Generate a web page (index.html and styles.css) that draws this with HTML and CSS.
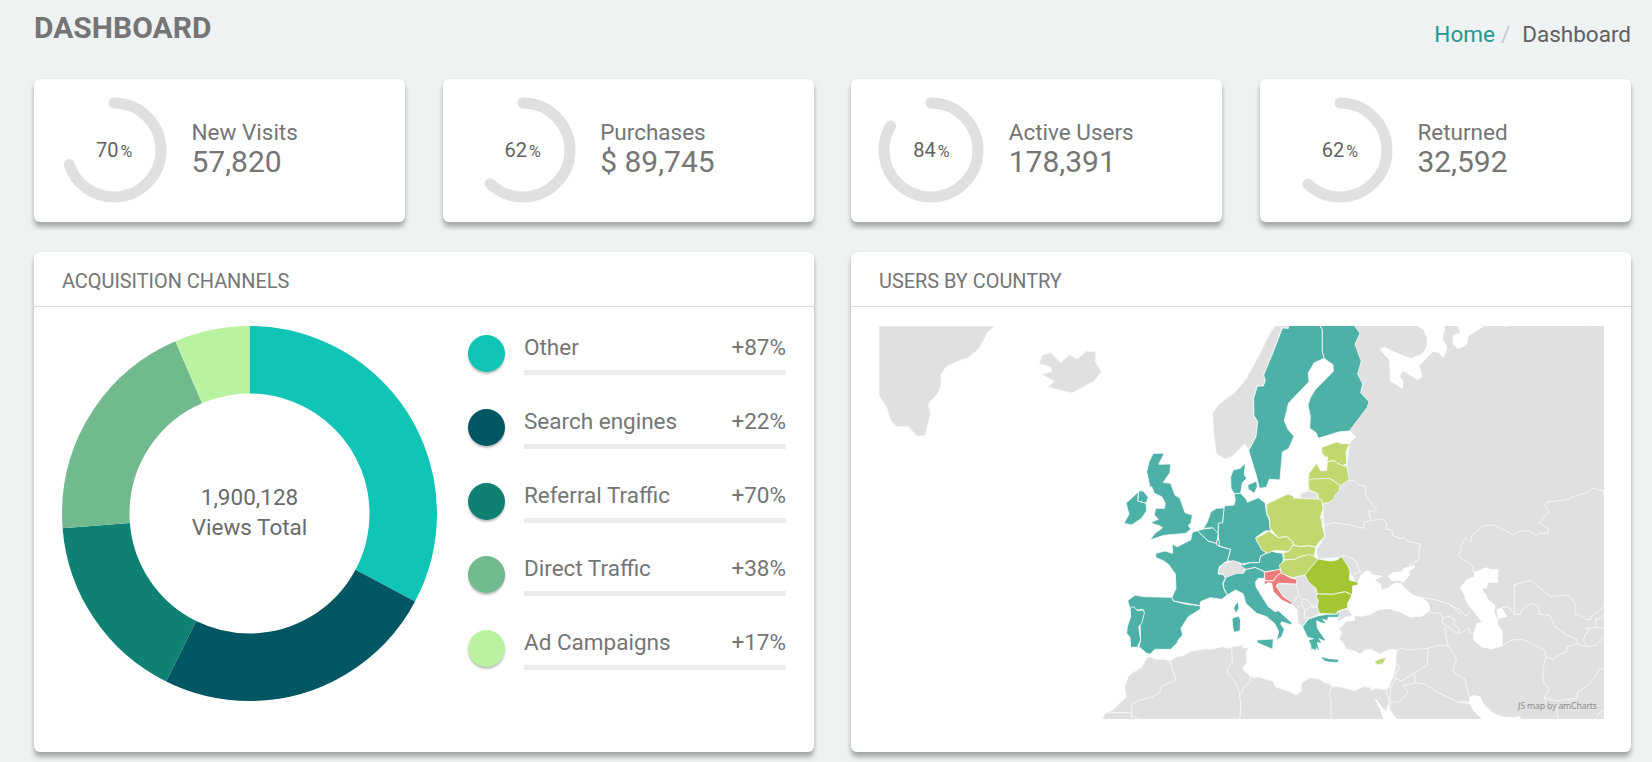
FILE: index.html
```
<!DOCTYPE html>
<html lang="en">
<head>
<meta charset="utf-8">
<title>Dashboard</title>
<link rel="stylesheet" href="styles.css">
</head>
<body>
<header class="page-head">
  <h1>DASHBOARD</h1>
  <nav class="crumbs"><a href="#">Home</a><span class="sep">/</span><span>Dashboard</span></nav>
</header>

<main>
  <section class="stats">
    <article class="card stat">
      <div class="ring"><svg viewBox="0 0 106 106"><circle cx="53" cy="53" r="47" pathLength="100" stroke-dasharray="70 100"/></svg><span class="pct">70<small>%</small></span></div>
      <div class="info"><span class="label">New Visits</span><span class="value">57,820</span></div>
    </article>
    <article class="card stat">
      <div class="ring"><svg viewBox="0 0 106 106"><circle cx="53" cy="53" r="47" pathLength="100" stroke-dasharray="62.3 100"/></svg><span class="pct">62<small>%</small></span></div>
      <div class="info"><span class="label">Purchases</span><span class="value">$ 89,745</span></div>
    </article>
    <article class="card stat">
      <div class="ring"><svg viewBox="0 0 106 106"><circle cx="53" cy="53" r="47" pathLength="100" stroke-dasharray="83.5 100"/></svg><span class="pct">84<small>%</small></span></div>
      <div class="info"><span class="label">Active Users</span><span class="value">178,391</span></div>
    </article>
    <article class="card stat">
      <div class="ring"><svg viewBox="0 0 106 106"><circle cx="53" cy="53" r="47" pathLength="100" stroke-dasharray="62 100"/></svg><span class="pct">62<small>%</small></span></div>
      <div class="info"><span class="label">Returned</span><span class="value">32,592</span></div>
    </article>
  </section>

  <section class="panels">
    <article class="card panel">
      <h2>ACQUISITION CHANNELS</h2>
      <div class="panel-body">
        <div class="donut">
          <svg viewBox="0 0 375 375">
            <g fill="none" stroke-width="67.5" transform="rotate(-90 187.5 187.5)">
              <circle class="s1" cx="187.5" cy="187.5" r="153.75" pathLength="360" stroke-dasharray="118 360"/>
              <circle class="s2" cx="187.5" cy="187.5" r="153.75" pathLength="360" stroke-dasharray="88.4 360" stroke-dashoffset="-118"/>
              <circle class="s3" cx="187.5" cy="187.5" r="153.75" pathLength="360" stroke-dasharray="59.1 360" stroke-dashoffset="-206.4"/>
              <circle class="s4" cx="187.5" cy="187.5" r="153.75" pathLength="360" stroke-dasharray="71.2 360" stroke-dashoffset="-265.5"/>
              <circle class="s5" cx="187.5" cy="187.5" r="153.75" pathLength="360" stroke-dasharray="23.3 360" stroke-dashoffset="-336.7"/>
            </g>
          </svg>
          <p class="total">1,900,128<br>Views Total</p>
        </div>
        <ul class="legend">
          <li><i class="dot d1"></i><div class="row"><span>Other</span><span>+87%</span></div></li>
          <li><i class="dot d2"></i><div class="row"><span>Search engines</span><span>+22%</span></div></li>
          <li><i class="dot d3"></i><div class="row"><span>Referral Traffic</span><span>+70%</span></div></li>
          <li><i class="dot d4"></i><div class="row"><span>Direct Traffic</span><span>+38%</span></div></li>
          <li><i class="dot d5"></i><div class="row"><span>Ad Campaigns</span><span>+17%</span></div></li>
        </ul>
      </div>
    </article>

    <article class="card panel">
      <h2>USERS BY COUNTRY</h2>
      <div class="panel-body">
        <svg class="map" viewBox="879 326 725 393">
          <!-- Greenland, Iceland -->
          <g class="land" transform="translate(860 310) scale(.33333)">
            <path d="M57 48H405L384 66 358 115 322 145 308 148 259 169 243 193V225L234 250 205 282 211 313 195 377 170 378 145 350 108 349 92 331 80 292 57 256Z"/>
            <path d="M537 162 547 135 573 128 602 158 628 134 652 147 680 123 708 126 705 154 724 184 703 213 636 249 565 231 582 213 544 193 574 185 573 171Z"/>
          </g>
          <!-- Russia, Ukraine, Turkey, Middle East, Central Asia -->
          <g class="land" transform="translate(1340 540) scale(.33333)">
            <path d="M40 -645H800V540H148L137 515 137 449 145 445 163 400 168 372 168 345 172 330 150 328 130 337 118 341 95 328 75 330 60 342 45 333 20 328 10 310-2 296 6 278-4 265 10 248 25 240 43 225 15 232-5 248-8 222 5 205 28 208 45 125 5 52-66 57-72 30-45-10-53-110-20-160 25-180 20-225 28-289 47-310 28-328Z"/>
          </g>
          <!-- North Africa -->
          <g class="land" transform="translate(1080 580) scale(.33333)">
            <path d="M65 418 78 398 98 390 138 352 134 320 145 290 155 280 185 262 203 231 215 232 225 238 255 238 270 243 290 231 310 227 335 213 380 207 400 207 425 200 445 205 460 200 490 195 488 203 505 204 498 218 500 250 488 262 490 270 510 288 522 293 535 291 578 304 587 321 630 335 648 345 662 335 665 308 690 293 718 297 728 305 752 313 755 320 778 320 823 332 850 320 870 322 878 332 882 325 917 329 930 365 930 418Z"/>
            <path d="M645-12 675-15 708 25 712 42 708 50 715 62 718 100 712 105 680 120 668 140 655 130 652 90 637 72 592 30 590 12 650 12Z"/>
          </g>
          <!-- Scandinavia -->
          <g transform="translate(1190 320) scale(.33333)">
            <path class="land" d="M258 15 240 40 210 100 168 178 132 220 85 254 68 279 72 350 79 400 103 417 128 409 164 371 176 390 198 350 203 304 192 290 191 235 202 198 220 198 226 182 221 165 250 95 275 24 295 25V15Z"/>
            <path class="eu" d="M296 15H388L397 28V95L403 115 373 128 355 158 357 185 296 249 283 302 294 328 312 349 296 386 277 396 270 480 238 478 229 502 208 505 200 470 176 392 198 350 203 304 192 288 191 235 202 198 220 198 226 182 221 165 250 95 277 24 295 25Z"/>
            <path class="eu" d="M388 15H492L510 40 495 73 514 124 503 162 518 192 512 218 537 245 532 262 478 333 446 336 385 355 378 338 359 324 361 290 354 254 361 234 375 210 430 154 429 134 403 116 397 95V28Z"/>
          </g>
          <!-- Western Europe -->
          <g class="eu" transform="translate(1100 440) scale(.33333)">
            <path d="M160 40H193L176 73 212 72 210 98 190 127 212 130 225 165 240 175 255 218 277 225 273 250 265 255 272 268 258 280 235 282 200 285 185 288 165 295 150 300 165 280 188 263 180 258 155 250 157 245 175 238 163 225 167 205 193 205 196 190 185 170 163 160 155 140 150 142 140 95 147 65Z"/>
            <path d="M117 152 130 153 145 172 138 190 113 183Z"/>
            <path d="M115 155 113 183 138 190 140 212 125 235 95 255 72 250 87 222 78 190Z"/>
            <path d="M167 340 195 333 218 340 216 312 232 320 272 300 277 277 293 272 305 285 325 303 350 310 355 318 392 328 383 362 358 380 355 402 370 403 376 415 368 430 373 450 382 465 365 478 330 473 302 485 300 497 260 490 220 483 216 472 228 445 226 402 207 375 192 363 168 353Z"/>
            <path d="M293 272 310 267 340 263 355 280 350 310 325 303 305 285Z"/>
            <path d="M310 265 320 250 333 215 350 205 373 203 368 248 355 255V280L338 263Z"/>
            <path d="M373 198 402 195 406 180 402 160 423 160 440 180 442 187 475 173 495 188 500 222 508 240 512 272 495 273 467 293 473 308 500 340 482 348 478 368 450 368 425 372 383 362 392 328 357 318 355 300 355 250 368 248Z"/>
            <path d="M350 302 357 298 358 318 350 315Z"/>
            <path d="M392 110 400 90 420 85 436 70 433 105 440 115 427 128 422 160 402 160 393 145Z"/>
            <path d="M443 135 470 123 472 140 463 160 445 148Z"/>
            <path class="land" d="M355 390 372 368 400 362 420 368 438 385 430 398 410 402 395 407 378 414 370 403 355 402Z"/>
            <path d="M370 430 378 412 410 400 430 400 438 388 465 382 493 395V415L475 415 467 425 468 440 483 465 505 500 525 515 535 512 575 548V555L545 545 542 552 553 568 545 590 530 600 536 575 525 552 500 530 470 520 437 490 430 462 407 450 382 465 372 445Z"/>
            <path d="M420 370 430 375 450 368 478 368 482 348 500 340 512 332 523 336 548 340 550 360 540 385 540 390 495 395 465 382 438 388 425 380Z"/>
            <path d="M470 600 520 597 518 628 472 608ZM396 535 415 528 422 540 420 573 402 577 398 560ZM405 495 415 485 417 505 408 520 401 505Z"/>
            <path d="M83 482 105 465 130 470 215 472 220 483 260 493 300 497 302 507 265 530 243 565 248 585 235 600 232 608 212 628 165 628 150 643 140 640 117 620 122 600 120 550 133 515 128 508 112 510 90 505Z"/>
            <path d="M90 505 102 500 112 512 130 510 133 520 125 550 116 560 122 600 112 622 92 622 90 592 80 580 82 560 92 530Z"/>
            <path class="red" d="M493 397 538 388 545 398 530 408 520 423 495 422Z"/>
            <path class="red" d="M545 398 570 413 590 418 590 432 535 430 528 438 550 470 575 487 577 495 545 480 520 455 515 430 503 428 495 435 492 422 520 423 530 408Z"/>
          </g>
          <!-- Baltic states and Central Europe -->
          <g class="lime" transform="translate(1240 430) scale(.33333)">
            <path class="land" d="M181 203 180 192 205 182 232 190V208H185Z"/>
            <path d="M245 52 290 36 305 41 328 41 318 65 320 100 308 107 290 98 283 92 262 95V80L256 82 246 70Z"/>
            <path d="M262 95 283 92 290 98 308 107 320 108 328 150 300 167 285 155 268 145 204 152 207 130 230 100 242 122 260 122Z"/>
            <path d="M204 152 215 147 268 145 285 155 300 167 298 182 285 195 282 208 265 218 248 220 235 208 233 190 207 180Z"/>
            <path d="M80 222 143 192 160 198 160 204 245 208 250 235 242 262 248 265 246 285 255 320 235 340 230 352 205 347 180 350 160 345 158 335 140 320 115 323 90 295 88 265 80 250Z"/>
            <path d="M47 325 88 303 115 323 140 320 158 335 160 345 145 365 123 362 100 362 82 370 65 360Z"/>
            <path d="M160 345 180 350 205 347 228 352 223 380 190 377 165 388 132 390 130 368 145 365Z"/>
            <path d="M132 390 165 388 190 377 210 373 223 380 234 388 210 425 195 435 157 443 125 430 118 405 130 395Z"/>
            <path class="green" d="M195 435 234 387 270 393 290 390 305 380 325 410 330 425 328 450 353 458 350 465 338 468 337 495 315 485 280 493 232 492 228 475 205 455Z"/>
            <path class="green" d="M232 492 280 493 315 485 337 495 323 522 323 535 295 543 288 553 238 550 232 532 235 512 228 500Z"/>
          </g>
          <!-- Greece, Crete -->
          <g class="eu" transform="translate(1080 580) scale(.33333)">
            <path d="M668 140 685 118 712 108 740 103 768 103 772 96 780 97 775 112 745 112 742 122 728 118 740 132 722 128 710 122 712 145 735 178 733 184 718 176 725 190 712 188 718 213 708 203 710 213 698 207 694 213 692 195 685 180 700 176 682 172Z"/>
            <path class="island" d="M727 233 745 238 775 241 770 246 735 242Z"/>
          </g>
          <path class="lime" transform="translate(1340 540) scale(.33333)" d="M103 365 120 357 140 352 128 372 112 375Z"/>
          <!-- Seas -->
          <g class="sea" transform="translate(1360 310) scale(.33333)">
            <path d="M172 40V48L190 60 200 80V110L185 132 152 145 110 128 73 111 58 118 88 150 90 213 128 237 130 215 120 198 130 183 172 210 188 200 178 168 218 126 235 128 251 143 262 112 247 85 255 60 252 40Z"/>
            <path d="M290 40 300 68 278 75V103L294 117 320 106 326 77 375 48V40ZM425 46 443 51 445 46ZM683 46 689 51 690 46Z"/>
          </g>
          <g class="sea" transform="translate(1340 540) scale(.33333)">
            <path d="M103 474 110 480 137 515 148 484V508L173 540H130L120 507Z"/>
            <path d="M388 470 403 465 422 470 430 490 460 520 490 530 520 532 538 528 545 540H428L400 512 388 490Z"/>
            <path d="M402 97 440 82 450 88 475 88 474 128 443 128 441 145 425 147 440 165 443 178 466 195 463 215 472 238 475 255 488 275V318L455 328 425 322 400 300V280L410 250 425 246 378 185 372 165 360 143 380 118 402 110ZM470 208 485 203 502 230 474 237Z"/>
            <path d="M53 125 62 105 78 92 90 93 95 103 130 108 105 120 122 133 125 147 140 145 165 128 182 128 195 145 220 165 245 172 263 185 270 200V213L245 230 210 232 180 217 150 207 115 210 90 225 60 230 35 225 22 205V190L38 160 40 140Z"/>
            <path d="M143 108 160 96 185 95 190 85 222 75 225 82 207 95 210 105 190 128 180 122 155 122Z"/>
            <path d="M-8 245 15 232 45 228 44 243 22 244-2 266Z"/>
          </g>
          <!-- Danube delta -->
          <path class="delta" transform="translate(1340 540) scale(.33333)" d="M28 124 45 125 54 129 50 135 38 136 28 134Z"/>
          <!-- Borders -->
          <g class="line" transform="translate(1360 310) scale(.33333)">
            <path d="M732 556 730 542 698 535 682 548 638 560 628 568 560 577 554 587 567 607 551 615 553 623 536 637 565 657 563 670 535 670 530 677 508 663 478 663 460 675 401 645 371 646 335 676 333 696 316 682 301 712 305 716 295 736 310 750 325 757 337 770 342 788"/>
            <path d="M-33 510-17 513-5 525 18 530 16 555 34 580 36 585 50 597 45 603 25 603 33 632 13 636 12 655-10 650-30 645-80 638-108 647M33 632 70 626 80 640 78 657 95 660 100 677 122 686 133 683 145 694 182 703 176 725 178 748 150 763 148 770"/>
          </g>
          <g class="line" transform="translate(1240 430) scale(.33333)">
            <path d="M248 220 250 235 242 262 248 285 255 320 235 340 228 352 223 380M305 378 320 377 350 395 352 410 362 425 345 430 335 450"/>
          </g>
          <g class="line" transform="translate(1080 580) scale(.33333)">
            <path d="M270 243 280 275 287 300 245 320 240 335 215 352 180 360 155 373V416M78 398H155M155 405 173 416M455 205 457 245 442 265 445 282 470 312 480 343 486 338 490 325 513 303 511 290M478 343 482 372 480 416M754 318 748 345 753 360V416"/>
            <path d="M650 12 652 25 655 45 640 68M655 48 668 58 680 58 695 75 710 78M652 82 668 76 675 95 672 112 688 115M668 58 665 78M675 92 690 80 714 84M803 85 775 93 772 105"/>
          </g>
          <g class="line" transform="translate(1340 540) scale(.33333)">
            <path d="M235 170 260 175 290 180 330 193 335 200 360 208 378 228 390 215M270 218 300 220 310 235 330 228 345 240 340 250 357 268 355 282M308 235 308 250 325 262 350 280 372 275 385 263 390 280 400 283M330 193 350 210 362 225M315 262 320 300 325 318"/>
            <path d="M170 332 185 325 205 330 265 325 300 315 325 318 350 355 338 390 345 400 375 418 382 445 388 470M265 325 262 375 222 400 185 423 165 415M222 400 228 428 190 437 205 455 180 485 150 487M228 428 255 432 290 455 350 485 388 490M360 490 365 483 388 488M168 372 180 380 168 400 163 425 152 440 150 487M137 449 148 485"/>
            <path d="M523 223V135L570 120 632 170 685 165 705 190V222L718 225 742 240 792 200M490 315 515 300 545 298 575 310 615 332 617 350 640 357 655 345 680 335 682 320 712 312 742 320 770 315 790 292M485 203 505 200 523 223H543L545 210 572 190 597 200 598 222 630 227 645 260 680 285 712 300V312"/>
            <path d="M617 350 608 395 612 430 628 450 612 473 650 482 710 475 715 455 745 435 770 405 775 390 792 385M612 473 620 490 648 505 655 537M742 320 730 300 735 285 750 270 735 265 770 262 765 240 780 235 792 225M742 240 755 238M765 262 790 264M765 537 785 512 794 512"/>
          </g>
          <text class="credit" x="1518" y="709" textLength="79">JS map by amCharts</text>
        </svg>
      </div>
    </article>
  </section>
</main>
</body>
</html>
```
FILE: styles.css
```
* { box-sizing: border-box; }
body {
  margin: 0;
  height: 762px;
  overflow: hidden;
  padding: 0 21px 0 34px;
  background: #eef2f3;
  color: #757575;
  font-family: Roboto, "Liberation Sans", sans-serif;
  font-size: 22.5px;
}
.page-head {
  display: flex;
  justify-content: space-between;
  height: 79px;
}
h1 {
  margin: 10px 0 0;
  font-size: 30px;
  line-height: 35px;
  font-weight: 700;
}
.crumbs {
  padding-top: 19px;
  line-height: 30px;
  color: #616161;
}
.crumbs a { color: #26998e; text-decoration: none; }
.crumbs .sep { margin: 0 12px 0 6px; color: #c4c8ca; }

.card {
  background: #fff;
  border-radius: 6px;
  box-shadow: 0 5px 5px rgba(0, 0, 0, .3), 0 0 3px rgba(0, 0, 0, .05);
}
.stats {
  display: grid;
  grid-template-columns: repeat(4, 1fr);
  gap: 37.5px;
}
.stat {
  display: flex;
  height: 143px;
  padding: 18px 0 0 27px;
}
.ring {
  display: grid;
  width: 106px;
  height: 106px;
  place-items: center;
}
.ring > * { grid-area: 1 / 1; }
.ring svg {
  width: 106px;
  transform: rotate(-90deg);
}
.ring circle {
  fill: none;
  stroke: #e0e0e0;
  stroke-width: 11;
  stroke-linecap: round;
}
.pct {
  font-size: 20px;
  color: #616161;
}
.pct small { margin-left: 2px; font-size: 16px; }
.info {
  display: flex;
  flex-direction: column;
  padding: 20px 0 0 24.5px;
}
.label { line-height: 30px; }
.value { font-size: 30px; line-height: 30px; }

.panels {
  display: grid;
  grid-template-columns: 1fr 1fr;
  gap: 37px;
  margin-top: 30px;
}
.panel { height: 500px; }
h2 {
  margin: 0;
  height: 55px;
  padding-left: 28px;
  border-bottom: 1px solid #dedede;
  font-size: 19.9px;
  line-height: 59px;
  font-weight: 400;
}
.panel-body {
  display: flex;
  padding: 19px 27px 0 28px;
}
.donut {
  display: grid;
  width: 375px;
  height: 375px;
  place-items: center;
}
.donut > * { grid-area: 1 / 1; }
.donut svg { width: 375px; }
.s1 { stroke: #11c5b6; }
.s2 { stroke: #005662; }
.s3 { stroke: #0f8173; }
.s4 { stroke: #70ba8d; }
.s5 { stroke: #b9f3a2; }
.total {
  margin: 0 0 4px;
  line-height: 30px;
  text-align: center;
  color: #6a6a6a;
}
.legend {
  flex: 1;
  margin: 9px 0 0;
  padding: 0 1px 0 31px;
  list-style: none;
}
.legend li {
  display: flex;
  gap: 19px;
  height: 73.8px;
}
.dot {
  width: 37px;
  height: 37px;
  border-radius: 50%;
  box-shadow: 0 2px 2px rgba(0, 0, 0, .25);
}
.d1 { background: #11c5b6; }
.d2 { background: #005662; }
.d3 { background: #0f8173; }
.d4 { background: #70ba8d; }
.d5 { background: #b9f3a2; }
.row {
  display: flex;
  flex: 1;
  justify-content: space-between;
  height: 40px;
  border-bottom: 5px solid #ececec;
  line-height: 25px;
}
.map {
  display: block;
  width: 725px;
  height: 393px;
}
.land, .eu, .lime, .green, .red {
  stroke: #f4f8f8;
  stroke-width: 2.6px;
  stroke-linejoin: round;
}
.land { fill: #e0e0e0; }
.eu { fill: #4db1a8; }
.lime { fill: #c1d86f; }
.green { fill: #a5c633; }
.red { fill: #ee7b7b; }
.sea { fill: #fff; }
.delta { fill: #a5c633; }
.island { stroke: #4db1a8; }
.line {
  fill: none;
  stroke: #f7f7f7;
  stroke-width: 3px;
  stroke-linejoin: round;
}
.credit {
  fill: #8c8c8c;
  font: 8.7px "Noto Sans", "DejaVu Sans", sans-serif;
}
```
